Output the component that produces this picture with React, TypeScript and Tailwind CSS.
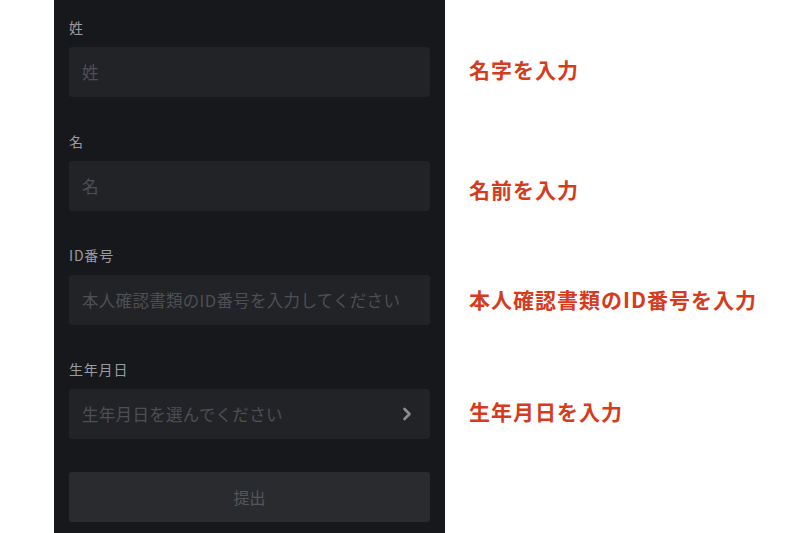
import React from "react";

const font = { fontFamily: '"Noto Sans CJK JP", "Noto Sans", sans-serif' };

function Field({ label, placeholder, chevron }: { label: string; placeholder: string; chevron?: boolean }) {
  return (
    <div className="flex flex-col">
      <div className="h-[20px] leading-[20px] text-[14px] text-[#9a9ba1] tracking-[0.8px]">{label}</div>
      <div className="mt-[10px] h-[50px] rounded-[3px] bg-[#222327] flex items-center justify-between pl-[13px] pr-[18px]">
        <span className="text-[16.5px] text-[#4e4f54] tracking-[0.3px]">{placeholder}</span>
        {chevron && (
          <svg width="10" height="14" viewBox="0 0 10 14">
            <path d="M2.5 2 L7.5 7 L2.5 12" fill="none" stroke="#8c8d92" strokeWidth="2.6" strokeLinecap="round" strokeLinejoin="round" />
          </svg>
        )}
      </div>
    </div>
  );
}

export default function App() {
  return (
    <div className="w-[800px] h-[533px] bg-white flex overflow-hidden" style={font}>
      <div className="ml-[54px] w-[391px] h-full bg-[#17181c] px-[15px] pt-[17px] flex flex-col gap-[34px]">
        <Field label="姓" placeholder="姓" />
        <Field label="名" placeholder="名" />
        <Field label="ID番号" placeholder="本人確認書類のID番号を入力してください" />
        <Field label="生年月日" placeholder="生年月日を選んでください" chevron />
        <div className="-mt-[1px] h-[50px] rounded-[3px] bg-[#2a2b2f] flex items-center justify-center text-[16px] text-[#55565b]">
          提出
        </div>
      </div>
      <div className="ml-[24px] flex flex-col text-[21px] font-bold text-[#d63b1d] leading-[28px] tracking-[1px]">
        <div className="mt-[55px]">名字を入力</div>
        <div className="mt-[92px]">名前を入力</div>
        <div className="mt-[82px]">本人確認書類のID番号を入力</div>
        <div className="mt-[84px]">生年月日を入力</div>
      </div>
    </div>
  );
}
